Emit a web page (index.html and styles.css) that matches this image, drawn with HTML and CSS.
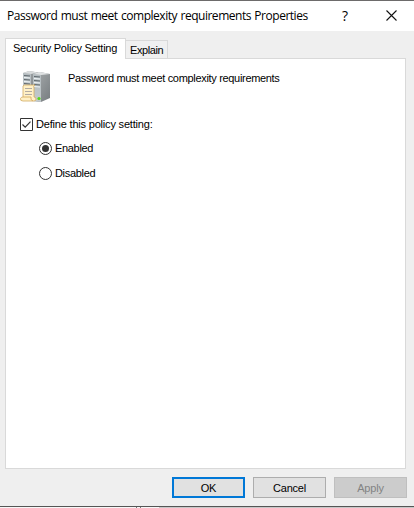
FILE: index.html
```html
<!DOCTYPE html>
<html lang="en">
<head>
<meta charset="utf-8">
<title>Password must meet complexity requirements Properties</title>
<link rel="stylesheet" href="styles.css">
</head>
<body>
<main class="dialog">
  <header class="titlebar">
    <h1 class="title">Password must meet complexity requirements Properties</h1>
    <span class="help">?</span>
    <svg class="close" width="11" height="11" viewBox="0 0 11 11"><path d="M.5.5l10 10M10.5.5l-10 10" fill="none" stroke="#111" stroke-width="1.1"/></svg>
  </header>
  <nav class="tabs">
    <div class="tab active"><span class="t-security">Security Policy Setting</span></div>
    <div class="tab"><span class="t-explain">Explain</span></div>
  </nav>
  <section class="page">
    <div class="policy">
      <svg class="icon" width="32" height="32" viewBox="0 0 32 32">
        <defs>
          <linearGradient id="side" x1="0" y1="0" x2="1" y2="1"><stop offset="0" stop-color="#a9adaf"/><stop offset="1" stop-color="#777d80"/></linearGradient>
          <linearGradient id="front" x1="0" y1="0" x2="0" y2="1"><stop offset="0" stop-color="#b4bcc0"/><stop offset="1" stop-color="#c3cacd"/></linearGradient>
        </defs>
        <path d="M3 2l6-2 9 1.500v20l-7 3-8-1z" fill="url(#side)"/>
        <path d="M3 2l8 1v22l-8-1z" fill="url(#front)"/>
        <path d="M3 2l6-2 9 1.500L11 3z" fill="#d9dcdd"/>
        <path d="M4 4.500l6 .5M4 8.500l6 .5M4 12.500l6 .5" stroke="#5f686d"/>
        <path d="M4 6.500l6 .5M4 10.500l6 .5" stroke="#eff5f7"/>
        <path d="M13 3l7-2 10 2v24l-9 4-8-1z" fill="url(#side)"/>
        <path d="M13 3l8 1v27l-8-1z" fill="url(#front)"/>
        <path d="M13 3l7-2 10 2-9 1z" fill="#dfe2e3"/>
        <path d="M14 5.500l6 .5M14 9.500l6 .5M14 13.500l6 .5" stroke="#5f686d"/>
        <path d="M14 7.500l6 .5M14 11.500l6 .5M14 15.500l6 .5" stroke="#eff5f7"/>
        <circle cx="19" cy="27.500" r="1.600" fill="#55d51c"/>
        <path d="M3 15q1-1.500 3-1h9q-2 1-1 3v9q2 0 2 2t-2 2H3q-3 0-2.500-2.500Q1 26 3 26z" fill="#fff0c6" stroke="#d0ab62" stroke-width=".8"/>
        <path d="M3 26h8q-1 3 2 4" fill="none" stroke="#d6ad62" stroke-width=".9"/>
        <path d="M5 17.500h7M5 20.500h7M5 23.500h7" stroke="#a8a19e" stroke-width=".9"/>
      </svg>
      <span class="t-policy">Password must meet complexity requirements</span>
    </div>
    <div class="check">
      <svg width="13" height="13" viewBox="0 0 13 13"><path d="M.5.5h12v12H.5z" fill="#fff" stroke="#333"/><path d="M2.500 6.500l2.700 2.700 5.300-5.500" fill="none" stroke="#333" stroke-width="1.200"/></svg>
      <span class="t-define">Define this policy setting:</span>
    </div>
    <div class="radio">
      <svg width="13" height="13" viewBox="0 0 13 13"><circle cx="6.500" cy="6.500" r="6" fill="#fff" stroke="#333"/><circle cx="6.500" cy="6.500" r="3.500" fill="#333"/></svg>
      <span class="t-enabled">Enabled</span>
    </div>
    <div class="radio">
      <svg width="13" height="13" viewBox="0 0 13 13"><circle cx="6.500" cy="6.500" r="6" fill="#fff" stroke="#333"/></svg>
      <span class="t-disabled">Disabled</span>
    </div>
  </section>
  <footer class="buttons">
    <button class="button default"><span class="t-ok">OK</span></button>
    <button class="button"><span class="t-cancel">Cancel</span></button>
    <button class="button" disabled><span class="t-apply">Apply</span></button>
  </footer>
</main>
<div class="behind"><i class="mark"></i><i class="mark"></i><i class="edge"></i></div>
</body>
</html>
```

FILE: styles.css
```css
* { box-sizing: border-box; }
body {
  margin: 0;
  width: 414px;
  height: 508px;
  overflow: hidden;
  background: #f0f0f0;
  color: #000;
  font: 11px/14px "Liberation Sans", Arial, sans-serif;
  letter-spacing: -0.32px;
}
svg { display: block; flex: none; }
span { white-space: nowrap; }
.dialog {
  display: flex;
  flex-direction: column;
  height: 507px;
  border-top: 1px solid #6d6b6b;
  border-bottom: 1px solid #555;
  background: #efefef;
}
.titlebar {
  display: flex;
  align-items: center;
  height: 30px;
  padding-left: 7px;
  background: #fff;
}
.title {
  width: 335px;
  margin: 0;
  font: 12px/16px "Open Sans", "Noto Sans", sans-serif;
  letter-spacing: -0.48px;
  word-spacing: 0.8px;
  white-space: nowrap;
}
.help { width: 44px; font: 14px/16px "Open Sans", sans-serif; }
.close { margin-top: -1px; }
.tabs {
  display: flex;
  align-items: flex-end;
  height: 27px;
  padding: 7px 0 0 5px;
}
.tab {
  width: 42px;
  height: 18px;
  padding: 2px 0 0 4px;
  border: 1px solid #d9d9d9;
  border-left: 0;
  border-bottom: 0;
  background: #f0f0f0;
}
.tab.active {
  z-index: 1;
  width: 121px;
  height: 21px;
  margin-bottom: -1px;
  padding: 2px 0 0 7px;
  border-left: 1px solid #d9d9d9;
  background: #fff;
}
.page {
  width: 401px;
  height: 411px;
  margin-left: 5px;
  border: 1px solid #d9d9d9;
  background: #fff;
}
.policy { display: flex; height: 59px; padding: 12px 0 0 14px; gap: 16px; }
.check { display: flex; height: 24px; padding-left: 14px; gap: 3px; }
.radio { display: flex; height: 25px; padding-left: 33px; gap: 3px; }
.check, .radio { align-items: flex-start; }
.check span, .radio span { margin-top: -1px; }
.t-security { letter-spacing: -0.23px; }
.t-explain { letter-spacing: -0.4px; }
.t-define { letter-spacing: -0.19px; }
.buttons { display: flex; gap: 8px; padding: 8px 0 0 172px; }
.button {
  width: 73px;
  height: 21px;
  padding: 0;
  border: 1px solid #adadad;
  background: #e1e1e1;
  color: #000;
  font: inherit;
  letter-spacing: -0.2px;
}
.button.default { border: 2px solid #0078d7; }
.button:disabled { border-color: #bfbfbf; background: #ccc; color: #838383; }
.behind { display: flex; height: 1px; padding-left: 136px; background: #f7f7f7; }
.mark { width: 1px; height: 1px; margin-right: 3px; background: #777; }
.edge { flex: 1; margin-left: 15px; background: #c8c8c8; }
```
